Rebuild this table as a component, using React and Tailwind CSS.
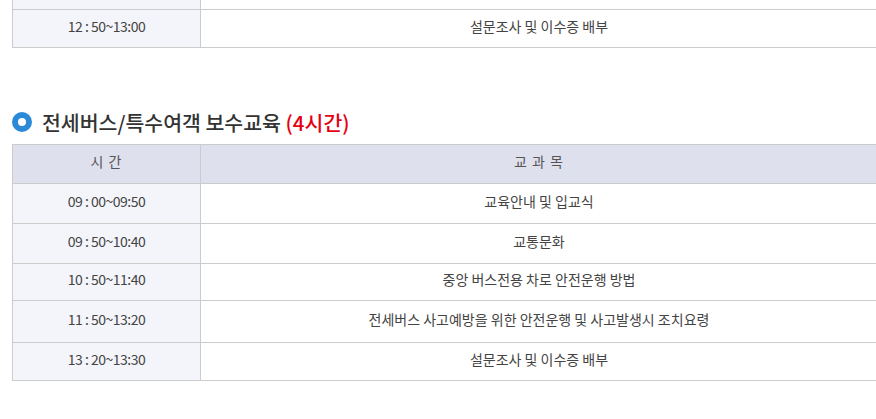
const rows = [
  { time: '09 : 00~09:50', subject: '교육안내 및 입교식', h: 'h-[40px]' },
  { time: '09 : 50~10:40', subject: '교통문화', h: 'h-[40px]' },
  { time: '10 : 50~11:40', subject: '중앙 버스전용 차로 안전운행 방법', h: 'h-[37px]' },
  { time: '11 : 50~13:20', subject: '전세버스 사고예방을 위한 안전운행 및 사고발생시 조치요령', h: 'h-[42px]' },
  { time: '13 : 20~13:30', subject: '설문조사 및 이수증 배부', h: 'h-[38px]' },
]

function Row({ time, subject, h }) {
  return (
    <div className={`flex ${h} border-b border-[#cccccc]`}>
      <div className="w-[188px] shrink-0 flex items-center justify-center bg-[#f4f5fa] border-r border-[#cccccc] tracking-[-0.5px] pb-[5px]">
        {time}
      </div>
      <div className="flex-1 flex items-center justify-center pb-[5px]">{subject}</div>
    </div>
  )
}

export default function App() {
  return (
    <div
      className="w-[876px] h-[419px] overflow-hidden bg-white text-[14px] text-[#444444]"
      style={{ fontFamily: '"Noto Sans CJK KR", "Noto Sans", sans-serif' }}
    >
      {/* ── previous table tail ─────────────────────────────── */}
      <div className="ml-[12px] w-[866px] h-[48px] border-l border-r border-[#cccccc]">
        <div className="flex h-[10px] border-b border-[#cccccc]">
          <div className="w-[188px] shrink-0 bg-[#f4f5fa] border-r border-[#cccccc]" />
          <div className="flex-1" />
        </div>
        <Row time="12 : 50~13:00" subject="설문조사 및 이수증 배부" h="h-[38px]" />
      </div>

      {/* ── heading ─────────────────────────────────────────── */}
      <div className="flex items-center ml-[12px] mt-[62px] h-[24px]">
        <span className="w-[20px] h-[20px] rounded-full border-[6px] border-[#2b8ad8] bg-white" />
        <h3 className="ml-[10px] text-[20.5px] font-medium text-[#333333] leading-none">
          전세버스/특수여객 보수교육 <span className="text-[#e60012]">(4시간)</span>
        </h3>
      </div>

      {/* ── schedule table ──────────────────────────────────── */}
      <div className="ml-[12px] mt-[10px] w-[866px] border-l border-r border-t border-[#cccccc]">
        <div className="flex h-[39px] bg-[#dfe0ee] border-b border-[#cccccc] text-[#555555]">
          <div className="w-[188px] shrink-0 flex items-center justify-center border-r border-[#cccccc] pb-[6px] tracking-[1px]">
            시 간
          </div>
          <div className="flex-1 flex items-center justify-center pb-[6px] tracking-[1px]">교 과 목</div>
        </div>
        {rows.map((r) => (
          <Row key={r.time} {...r} />
        ))}
      </div>
    </div>
  )
}
